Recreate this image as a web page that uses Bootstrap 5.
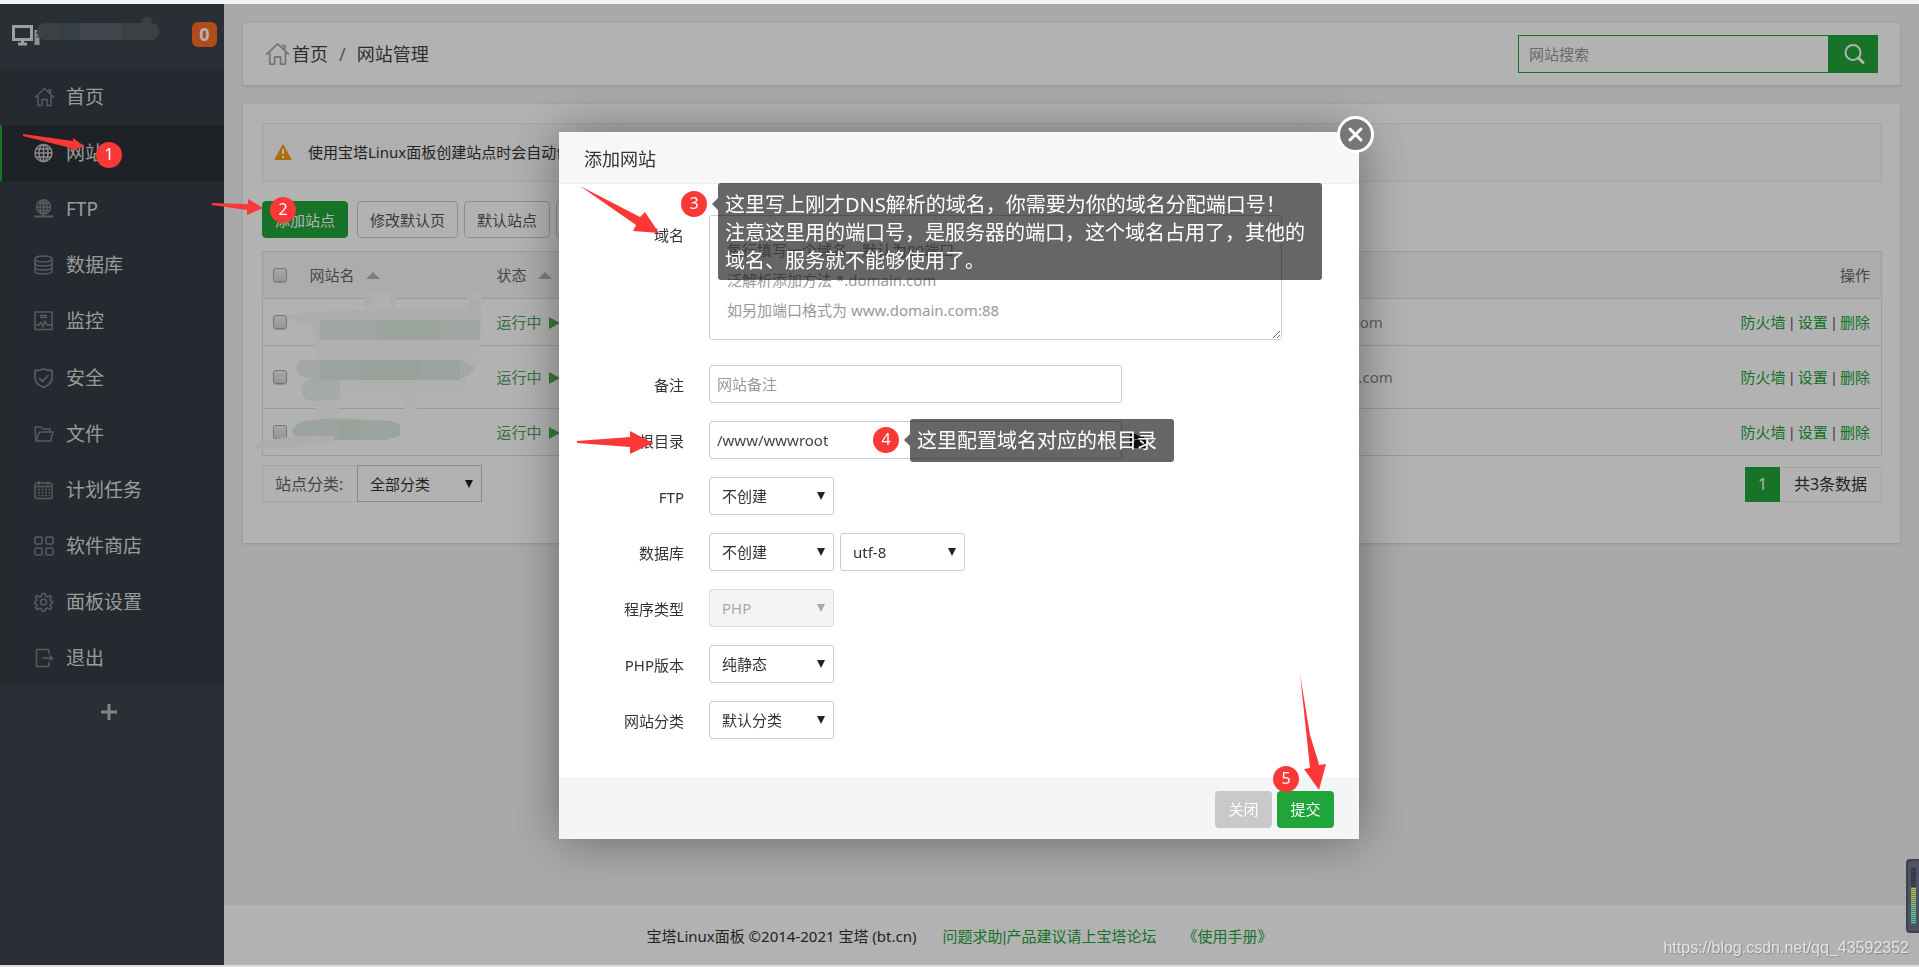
<!DOCTYPE html>
<html lang="zh-CN">
<head>
<meta charset="utf-8">
<meta name="viewport" content="width=device-width, initial-scale=1">
<title>网站管理</title>
<link href="https://cdn.jsdelivr.net/npm/bootstrap@5.3.0/dist/css/bootstrap.min.css" rel="stylesheet">
<style>
:root { --bt-green: #20a53a; --mark-red: #fb3838; }
body {
  font: 15px/20px "Noto Sans", "Noto Sans CJK SC", sans-serif;
  color: #333; background: #fff; min-height: 100vh;
  padding: 4px 0 2px; box-shadow: inset 0 4px 0 #f4f4f4, inset 0 -2px 0 #dedede;
}
a { text-decoration: none; color: var(--bt-green); }
.app { min-height: calc(100vh - 6px); background: #f2f2f2; }

/* sidebar */
.side { width: 224px; background: #3c444d; }
.side-top { height: 65px; padding: 0 7px 4px 11px; }
.smear { width: 122px; height: 17px; border-radius: 8px; margin: 0 0 6px -4px; position: relative;
  background: linear-gradient(90deg,#555c62 0 20%,#4e5a66 20% 35%,#5b636a 35% 70%,#545c60 70%); }
.smear::after { content: ""; position: absolute; right: 7px; top: -6px; width: 10px; height: 10px; border-radius: 5px; background: #545c60; }
.msg-count { width: 25px; height: 25px; border-radius: 6px; background: #fc6d26; color: #fff; font-size: 18px; font-weight: 700; line-height: 24px; text-align: center; }
.menu-list { background: #363c45; min-height: 617px; }
.menu-list a { padding-left: 32px; gap: 12px; border-left: 2px solid #393d40; color: #dcdedf; font-size: 19px; line-height: 28px; }
.menu-list a svg { width: 20px; height: 20px; color: #7d8288; flex: none; }
.menu-list .current { background: #2c3138; border-color: var(--bt-green); }
.menu-list .current svg { color: #c4c6c8; }
.ico { fill: none; stroke: currentColor; stroke-width: 1.5; stroke-linejoin: round; }
.menu-add { background: none; border: 0; height: 50px; color: #bbb; padding: 0 6px 0 0; }

/* page */
.content { padding: 19px 19px 0; gap: 19px; }
.panel { background: #fff; box-shadow: 0 1px 3px rgba(0,0,0,.14); }
.crumbs { height: 62px; padding: 0 22px; font-size: 18px; line-height: 26px; color: #444; }
.crumbs a { color: #444; margin-left: 3px; }
.crumbs .home { color: #aaa; }
.crumb-sep { margin: 0 11px; color: #777; }
.search { width: 360px; height: 38px; }
.search input { border: 1px solid var(--bt-green); padding: 0 10px; min-width: 0; background: #fff; font-size: 15px; }
.search input::placeholder { color: #999; }
.search button { width: 49px; border: 0; background: var(--bt-green); color: #fff; padding: 0 0 4px; }
.sites { padding: 19px 18px 41px 19px; }
.notice { height: 59px; border: 1px solid #eaeaea; background: #fbfbfb; padding: 0 11px 2px; gap: 16px; margin-bottom: 19px; color: #333; }
.tools { margin-bottom: 13px; gap: 6px; }
.tool { height: 37px; border: 1px solid #ccc; border-radius: 4px; background: #fff; color: #555; padding: 0 12px; line-height: 20px; white-space: nowrap; }
.tool-main { background: var(--bt-green); border-color: var(--bt-green); color: #fff; margin-right: 3px; }
.site-table { table-layout: fixed; border: 1px solid #e2e2e2; margin: 0 0 9px; color: #666; border-collapse: collapse; width: 100%; }
.site-table th { height: 47px; background: #f7f7f7; font-weight: 400; }
.site-table th, .site-table td { padding: 0 11px 0 10px; border-bottom: 1px solid #ddd; vertical-align: middle; }
.site-table td { height: 47px; }
.site-table .tall td { height: 63px; }
.site-table input { appearance: none; display: block; width: 14px; height: 14px; border: 1px solid #a8a8a8; border-radius: 3px; background: linear-gradient(#eee,#d8d8d8); margin: 0; box-shadow: 0 1px 1px #ccc; }
.site-table .domain { color: #888; }
.col-check { width: 37px; } .col-name { width: 187px; } .col-domain { width: 297px; } .col-act { width: 242px; }
.bar { font-family: "Liberation Sans", sans-serif; white-space: pre; }
.up { display: inline-block; border: 7px solid transparent; border-top: 0; border-bottom: 7px solid #b4b4b4; margin-left: 11px; vertical-align: 2px; }
.run { display: inline-block; border: 6px solid transparent; border-left: 11px solid #4caf50; border-right: 0; margin-left: 7px; vertical-align: -1px; }
.ok { color: #4ba35a; }
.blurred { left: -10px; top: -10px; width: 250px; height: 220px; pointer-events: none; }
.filter label { height: 37px; border: 1px solid #ececec; border-right: 0; padding: 0 12px; font-size: 16px; line-height: 36px; color: #666; width: 95px; white-space: nowrap; }
.pick { appearance: none; width: 125px; height: 38px; border: 1px solid #ccc; border-radius: 3px; padding: 0 12px; color: #333; line-height: 20px;
  background: #fff url("data:image/svg+xml,%3Csvg xmlns='http://www.w3.org/2000/svg' width='8' height='8'%3E%3Cpath d='M0 0h8L4 8z' fill='%23222'/%3E%3C/svg%3E") no-repeat right 8px top 14px; }
.pick:disabled { color: #aca899; opacity: 1; border-color: #ddd; background-color: #f3f3f3;
  background-image: url("data:image/svg+xml,%3Csvg xmlns='http://www.w3.org/2000/svg' width='8' height='8'%3E%3Cpath d='M0 0h8L4 8z' fill='%23aca899'/%3E%3C/svg%3E"); }
.filter .pick { border-radius: 0; height: 37px; border-color: #c4c4c4; }
.pages { font-size: 16px; line-height: 33px; color: #333; margin-top: 2px; }
.pages b { background: var(--bt-green); color: #fff; font-weight: 400; width: 35px; height: 35px; text-align: center; border: 1px solid var(--bt-green); }
.pages span { border: 1px solid #ececec; border-left: 0; width: 102px; height: 35px; text-align: center; white-space: nowrap; }
.foot { height: 60px; background: #fff; padding: 2px 224px 0 0; gap: 26px; }

/* dialog */
.veil { position: fixed; inset: 4px 0 2px; background: rgba(0,0,0,.3); z-index: 10; padding: 2px 1px 0 0; }
.dlg { width: 800px; background: #fff; border-radius: 2px; box-shadow: 1px 1px 50px rgba(0,0,0,.4); }
.dlg-head { height: 52px; background: #f7f7f7; border-bottom: 1px solid #eee; padding: 0 25px; font-size: 18px; line-height: 54px; font-weight: 400; }
.dlg-close { top: -16px; right: -15px; width: 37px; height: 37px; border: 3px solid #fff; border-radius: 50%; background: #777; padding: 0; }
.dlg-body { padding: 31px 0 39px; }
.line { gap: 25px; margin-bottom: 18px; }
.line > label { width: 125px; text-align: right; line-height: 38px; padding-top: 1px; height: 38px; }
.line textarea { width: 573px; height: 125px; line-height: 30px; padding: 19px 17px; border: 1px solid #ccc; border-radius: 3px; }
.line input { width: 413px; height: 38px; border: 1px solid #ccc; border-radius: 3px; padding: 0 7px; color: #444; }
.line ::placeholder { color: #999; }
.line-first { margin-bottom: 25px; }
.pair { gap: 6px; }
.dlg-foot { height: 61px; background: #f4f6f6; border-top: 1px solid #edf1f1; gap: 5px; padding: 0 25px; }
.dlg-foot button { height: 37px; width: 57px; border: 0; border-radius: 4px; color: #fff; padding: 0; background: #c9c9c9; }
.dlg-foot .send { background: var(--bt-green); }

/* numbered notes */
.notes { z-index: 20; pointer-events: none; }
.dot { position: absolute; width: 26px; height: 26px; border-radius: 50%; background: var(--mark-red); color: #fff; font-size: 16px; line-height: 24px; text-align: center; }
.dot-1 { left: 96px; top: 142px; } .dot-2 { left: 270px; top: 197px; }
.dot-3 { left: 122px; top: 59px; } .dot-4 { left: 314px; top: 295px; } .dot-5 { left: 714px; top: 634px; }
.tip { position: absolute; background: rgba(0,0,0,.6); border-radius: 3px; color: #fff; font-size: 20px; line-height: 28px; padding: 8px 7px; white-space: nowrap; }
.tip::before { content: ""; position: absolute; right: 100%; top: 15px; border: 6px solid transparent; border-left: 0; border-right-color: rgba(0,0,0,.6); }
.tip-3 { left: 159px; top: 51px; width: 604px; height: 97px; } .tip-4 { left: 351px; top: 287px; width: 264px; height: 43px; }
.notes svg { position: absolute; left: 0; top: 0; overflow: visible; fill: var(--mark-red); }
.meter { position: fixed; right: 0; top: 859px; width: 13px; height: 74px; z-index: 30; background: #4d5363; border: 2px solid #3c414e; border-right: 0; border-radius: 4px 0 0 4px; padding: 7px 3px; }
.meter i { display: block; height: 56px; width: 5px; background: repeating-linear-gradient(transparent 0 1px,#4d5363aa 1px 2px), linear-gradient(#2e323c 0 34%,#d8c040 35%,#8cc874 65%,#3fc9b4); }
.src { position: fixed; right: 10px; bottom: 8px; z-index: 30; font: 16px/22px "Liberation Sans", sans-serif; color: #e4e4e4; text-shadow: 1px 1px 1px #888; }
</style>
</head>
<body>
<div class="app d-flex">
  <aside class="side flex-shrink-0">
    <div class="side-top d-flex align-items-center">
      <svg width="30" height="22" viewBox="0 0 30 22" fill="none" stroke="#e2e4e6" stroke-width="3"><path d="M2.500 2.500h18v13h-18zM7 20h9M11.500 16v4"/><path d="M26 6v15" stroke-width="5" stroke="#c9cccf"/><path d="M25 9h3M25 13h3" stroke="#555" stroke-width="1"/></svg>
      <div class="smear"></div>
      <span class="msg-count ms-auto">0</span>
    </div>
    <nav class="menu-list d-flex flex-column">
      <a href="#" class="d-flex align-items-center flex-fill"><svg class="ico" viewBox="0 0 20 20"><path d="M1 10.500 10.500 1.500 20 10.500M14 3h2.500v3M4 9v9.500h4v-6h5v6h4V9"/></svg>首页</a>
      <a href="#" class="current d-flex align-items-center flex-fill"><svg class="ico" viewBox="0 0 20 20"><circle cx="9.500" cy="10" r="8.500"/><ellipse cx="9.500" cy="10" rx="4.500" ry="8.500"/><path d="M9.500 1.500v17M1 10h17M2.500 6h14M2.500 14h14"/></svg>网站</a>
      <a href="#" class="d-flex align-items-center flex-fill"><svg class="ico" viewBox="0 0 20 20"><circle cx="9.500" cy="8" r="7"/><ellipse cx="9.500" cy="8" rx="3.500" ry="7"/><path d="M9.500 1v17M3 8h13M4 4.500h11M4 11.500h11"/><path d="M0 17.500h19" stroke-width="2"/></svg>FTP</a>
      <a href="#" class="d-flex align-items-center flex-fill"><svg class="ico" viewBox="0 0 20 20"><ellipse cx="9.500" cy="4" rx="8.500" ry="3"/><path d="M1 4v12c0 4 17 4 17 0V4M1 8c0 4 17 4 17 0M1 12c0 4 17 4 17 0"/></svg>数据库</a>
      <a href="#" class="d-flex align-items-center flex-fill"><svg class="ico" viewBox="0 0 20 20"><path d="M1 1h17v17.500H1zM6 4.500h7M6 6.500h7M1 14h4l2-3 2 5 2-6 2 4h5"/></svg>监控</a>
      <a href="#" class="d-flex align-items-center flex-fill"><svg class="ico" viewBox="0 0 20 20"><path d="M9.500 1C7 2 4 2.500 1 2.500V10c0 5 4 7.500 8.500 9.500C14 17.500 18 15 18 10V2.500C15 2.500 12 2 9.500 1zM5 10l3.500 3.500L14.500 7" stroke-width="1.800"/></svg>安全</a>
      <a href="#" class="d-flex align-items-center flex-fill"><svg class="ico" viewBox="0 0 20 20"><path d="M2 17 1 3h6l2 2h7v3M2 17 5.500 8H19l-2.500 9z"/></svg>文件</a>
      <a href="#" class="d-flex align-items-center flex-fill"><svg class="ico" viewBox="0 0 20 20"><rect x="1" y="3" width="17" height="15.500" rx="2"/><path d="M1 6.500h17M5 1v4M14 1v4"/><path d="M4 9.500h12M4 12.500h12M4 15.500h12" stroke-dasharray="2 1.500"/></svg>计划任务</a>
      <a href="#" class="d-flex align-items-center flex-fill"><svg class="ico" viewBox="0 0 20 20" stroke-width="2"><rect x="1" y="1" width="7" height="7" rx="1.500"/><rect x="12" y="1" width="7" height="7" rx="1.500"/><rect x="1" y="12" width="7" height="7" rx="1.500"/><rect x="12" y="12" width="7" height="7" rx="1.500"/></svg>软件商店</a>
      <a href="#" class="d-flex align-items-center flex-fill"><svg class="ico" viewBox="0 0 20 20"><circle cx="9.500" cy="10" r="3"/><path d="m8 1.500h3l.5 2.500 2 1 2.500-1.500 1.500 2-1.500 2 .5 1.500 2 .5v2l-2 .5-.5 1.500 1.500 2-1.500 2-2.500-1.500-2 1-.5 2H8l-.5-2-2-1L3 17.500l-1.500-2L3 13.500 2.500 12l-2-.5v-2l2-.5L3 7.500l-1.500-2L3 3.500 5.500 5l2-1z"/></svg>面板设置</a>
      <a href="#" class="d-flex align-items-center flex-fill"><svg class="ico" viewBox="0 0 20 20"><path d="M15 6V3q0-1.500-1.500-1.500h-11V18.500h11Q15 18.500 15 17v-3M8 10h10M15.500 7.500 18.500 10l-3 2.500"/></svg>退出</a>
    </nav>
    <button class="menu-add w-100" aria-label="添加"><svg width="18" height="18" stroke="currentColor" stroke-width="3"><path d="M1 9h16M9 1v16"/></svg></button>
  </aside>

  <main class="flex-grow-1 d-flex flex-column">
    <div class="content d-flex flex-column flex-grow-1">
      <div class="panel crumbs d-flex align-items-center">
        <svg class="ico home" width="24" height="24" viewBox="0 0 20 20"><path d="M1 10.500 10.500 1.500 20 10.500M14 3h2.500v3M4 9v9.500h4v-6h5v6h4V9"/></svg>
        <a href="#">首页</a><span class="crumb-sep">/</span><span>网站管理</span>
        <form class="search d-flex ms-auto">
          <input class="flex-grow-1" type="text" placeholder="网站搜索" aria-label="网站搜索">
          <button type="button" aria-label="搜索"><svg width="22" height="22" fill="none" stroke="currentColor" stroke-width="2"><circle cx="10" cy="9.500" r="7.500"/><path d="m15.500 15 4.500 4.500" stroke-width="3" stroke-linecap="round"/></svg></button>
        </form>
      </div>

      <section class="panel sites">
        <div class="notice d-flex align-items-center overflow-hidden text-nowrap">
          <svg width="18" height="16" viewBox="0 0 18 16"><path d="M9 0l9 16H0z" fill="#f5a010"/><path d="M9 5v5M9 12v2" stroke="#fff" stroke-width="2"/></svg>
          <span>使用宝塔Linux面板创建站点时会自动创</span>
        </div>
        <div class="tools d-flex">
          <button class="tool tool-main">添加站点</button>
          <button class="tool">修改默认页</button>
          <button class="tool">默认站点</button>
          <button class="tool">分类管理</button>
        </div>
        <div class="position-relative">
          <table class="site-table">
            <colgroup><col class="col-check"><col class="col-name"><col><col class="col-domain"><col class="col-act"></colgroup>
            <thead><tr><th><input type="checkbox" aria-label="全选"></th><th>网站名<span class="up"></span></th><th>状态<span class="up"></span></th><th></th><th class="text-end">操作</th></tr></thead>
            <tbody>
              <tr><td><input type="checkbox" aria-label="选择第1行"></td><td></td><td><a class="ok" href="#">运行中<span class="run"></span></a></td><td class="domain">com</td><td class="text-end"><a href="#">防火墙</a><span class="bar"> | </span><a href="#">设置</a><span class="bar"> | </span><a href="#">删除</a></td></tr>
              <tr class="tall"><td><input type="checkbox" aria-label="选择第2行"></td><td></td><td><a class="ok" href="#">运行中<span class="run"></span></a></td><td class="domain ps-3">.com</td><td class="text-end"><a href="#">防火墙</a><span class="bar"> | </span><a href="#">设置</a><span class="bar"> | </span><a href="#">删除</a></td></tr>
              <tr><td><input type="checkbox" aria-label="选择第3行"></td><td></td><td><a class="ok" href="#">运行中<span class="run"></span></a></td><td></td><td class="text-end"><a href="#">防火墙</a><span class="bar"> | </span><a href="#">设置</a><span class="bar"> | </span><a href="#">删除</a></td></tr>
            </tbody>
          </table>
          <svg class="blurred position-absolute" viewBox="252 241 250 220">
            <path d="M361 312l9-20h20l8 18 65-4 7-12h12v34l-6 40-10 1-2 22-45 2-2 18h-12l-3-17-60 3-8 22-18 2-1-40V340l-8-18-20-6z" fill="#fdfdfd"/>
            <path d="M366 298h8l-4 8h-8zM388 298h8l-2 12zM470 298h10l-2 14-12 2z" fill="#f3f6f4"/>
            <path d="M286 316q60-10 195-6v30H316q0-15-18-18z" fill="#f5f9f6"/>
            <path d="M320 320h160v20H320z" fill="#e4eee7"/><path d="M380 320h60v20h-60z" fill="#deece2"/>
            <path d="M320 360h140v20H320z" fill="#dfebe2"/><path d="M360 360h60v20h-60z" fill="#dae9de"/>
            <path d="M320 360v20h-8l-14-6q-4-16 6-14zM460 360q14 4 14 8t-10 10h-4z" fill="#eaf1ec"/>
            <path d="M320 380q-18-4-18 10t18 10h20v-20z" fill="#eef4f0"/>
            <path d="M300 422q30-6 70-2 30 0 30 6v10l-14 4H310q-18-2-18-10z" fill="#dfebe2"/><path d="M340 421h20v19h-20z" fill="#d9e8dc"/>
            <path d="M254 444q30-10 80-8v5q-40 8-70 8-12 0-10-5z" fill="#f8f8f8"/>
          </svg>
        </div>
        <div class="filter d-flex">
          <label for="cat">站点分类:</label>
          <select id="cat" class="pick"><option>全部分类</option></select>
          <div class="pages d-flex ms-auto"><b>1</b><span>共3条数据</span></div>
        </div>
      </section>
    </div>
    <footer class="foot d-flex align-items-center justify-content-center">
      <span>宝塔Linux面板 ©2014-2021 宝塔 (bt.cn)</span><a href="#">问题求助<span class="bar">|</span>产品建议请上宝塔论坛</a><a href="#">《使用手册》</a>
    </footer>
  </main>
</div>

<div class="veil d-flex align-items-center justify-content-center">
  <div class="dlg position-relative" role="dialog" aria-labelledby="dlgTitle">
    <h2 class="dlg-head m-0" id="dlgTitle">添加网站</h2>
    <button class="dlg-close position-absolute" aria-label="关闭窗口"><svg class="d-block m-auto" width="15" height="15" stroke="#fff" stroke-width="3" stroke-linecap="round"><path d="M2 2l11 11M13 2 2 13"/></svg></button>
    <form class="dlg-body">
      <div class="line line-first d-flex"><label for="f1">域名</label><textarea id="f1" placeholder="每行填写一个域名，默认为80端口&#10;泛解析添加方法 *.domain.com&#10;如另加端口格式为 www.domain.com:88"></textarea></div>
      <div class="line d-flex"><label for="f2">备注</label><input id="f2" type="text" placeholder="网站备注"></div>
      <div class="line d-flex"><label for="f3">根目录</label><div class="d-flex align-items-center gap-2"><input id="f3" type="text" value="/www/wwwroot"><svg width="18" height="15" viewBox="0 0 18 15"><path d="M0 1h6l2 2h6v3H4L1 14H0zM5 7h13l-3 8H2z" fill="#222"/></svg></div></div>
      <div class="line d-flex"><label for="f4">FTP</label><select id="f4" class="pick"><option>不创建</option></select></div>
      <div class="line d-flex"><label for="f5">数据库</label><div class="pair d-flex"><select id="f5" class="pick"><option>不创建</option></select><select class="pick" aria-label="编码"><option>utf-8</option></select></div></div>
      <div class="line d-flex"><label for="f6">程序类型</label><select id="f6" class="pick" disabled><option>PHP</option></select></div>
      <div class="line d-flex"><label for="f7">PHP版本</label><select id="f7" class="pick"><option>纯静态</option></select></div>
      <div class="line d-flex mb-0"><label for="f8">网站分类</label><select id="f8" class="pick"><option>默认分类</option></select></div>
    </form>
    <div class="dlg-foot d-flex align-items-center justify-content-end"><button type="button">关闭</button><button type="button" class="send">提交</button></div>

    <div class="notes position-absolute top-0 start-0">
      <svg width="10" height="10"><path d="M21 54 81 85l5-5 14 21-26-2 3-6z"/><path d="M18 309v2l53 4v7l23-11-23-12v6z"/><path d="M741 542l10 61 9 29-1 1 8-1-7 26-15-21 6-1z"/></svg>
      <span class="dot dot-3">3</span>
      <div class="tip tip-3">这里写上刚才DNS解析的域名，你需要为你的域名分配端口号！<br>注意这里用的端口号，是服务器的端口，这个域名占用了，其他的<br>域名、服务就不能够使用了。</div>
      <span class="dot dot-4">4</span>
      <div class="tip tip-4">这里配置域名对应的根目录</div>
      <span class="dot dot-5">5</span>
    </div>
  </div>
</div>

<div class="notes position-absolute top-0 start-0">
  <svg width="10" height="10"><path d="M23 134v2l48 12v3l13-5-11-8v3z"/><path d="M212 203v2l35 5v5l16-7-15-9v5z"/></svg>
  <span class="dot dot-1">1</span>
  <span class="dot dot-2">2</span>
</div>
<div class="meter"><i></i></div>
<div class="src">https://blog.csdn.net/qq_43592352</div>
<script src="https://cdn.jsdelivr.net/npm/bootstrap@5.3.0/dist/js/bootstrap.bundle.min.js"></script>
</body>
</html>
